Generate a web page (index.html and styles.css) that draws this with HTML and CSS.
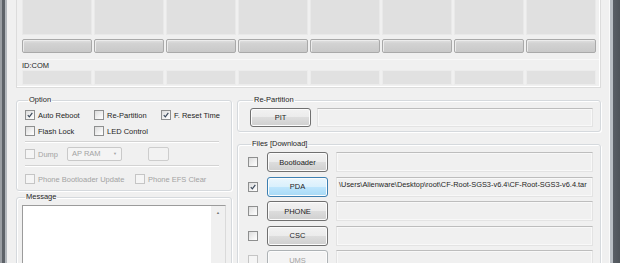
FILE: index.html
```html
<!DOCTYPE html>
<html lang="en">
<head>
    <meta charset="UTF-8">
    <title>Odin3</title>
    <link rel="stylesheet" href="styles.css">
</head>
<body>
    <div class="screen">
        <div class="edge-left"></div>
        <div class="window">
            <div class="top-frame">
                <div class="cells">
                    <div class="cell"></div><div class="cell"></div><div class="cell"></div><div class="cell"></div>
                    <div class="cell"></div><div class="cell"></div><div class="cell"></div><div class="cell"></div>
                </div>
                <div class="bars">
                    <div class="bar"></div><div class="bar"></div><div class="bar"></div><div class="bar"></div>
                    <div class="bar"></div><div class="bar"></div><div class="bar"></div><div class="bar"></div>
                </div>
                <div class="idcom">
                    <div class="id-label">ID:COM</div>
                    <div class="id-cells">
                        <div class="id-cell"></div><div class="id-cell"></div><div class="id-cell"></div><div class="id-cell"></div>
                        <div class="id-cell"></div><div class="id-cell"></div><div class="id-cell"></div><div class="id-cell"></div>
                    </div>
                </div>
            </div>

            <div class="lower">
                <div class="col-left">
                    <fieldset class="group option">
                        <legend>Option</legend>
                        <div class="opt-grid">
                            <label class="check"><span class="box checked"><svg viewBox="0 0 10 10"><path d="M2.2 5.2 L4.2 7.4 L7.9 2.4"/></svg></span>Auto Reboot</label>
                            <label class="check"><span class="box"></span>Re-Partition</label>
                            <label class="check"><span class="box checked"><svg viewBox="0 0 10 10"><path d="M2.2 5.2 L4.2 7.4 L7.9 2.4"/></svg></span>F. Reset Time</label>
                            <label class="check"><span class="box"></span>Flash Lock</label>
                            <label class="check"><span class="box"></span>LED Control</label>
                        </div>
                        <div class="sep"></div>
                        <div class="dump-row">
                            <label class="check disabled"><span class="box"></span>Dump</label>
                            <div class="combo">AP RAM<span class="arrow">&#9660;</span></div>
                            <div class="small-box"></div>
                        </div>
                        <div class="sep"></div>
                        <div class="phone-row">
                            <label class="check disabled wide"><span class="box"></span>Phone Bootloader Update</label>
                            <label class="check disabled"><span class="box"></span>Phone EFS Clear</label>
                        </div>
                    </fieldset>
                    <fieldset class="group message">
                        <legend>Message</legend>
                        <div class="msg-box">
                            <div class="msg-text"></div>
                            <div class="msg-scroll"><span class="up">&#9650;</span></div>
                        </div>
                    </fieldset>
                </div>

                <div class="col-right">
                    <fieldset class="group repart">
                        <legend>Re-Partition</legend>
                        <div class="file-row">
                            <button class="btn">PIT</button>
                            <div class="field"></div>
                        </div>
                    </fieldset>
                    <fieldset class="group files">
                        <legend>Files [Download]</legend>
                        <div class="file-list">
                            <div class="file-row">
                                <span class="box"></span>
                                <button class="btn">Bootloader</button>
                                <div class="field"></div>
                            </div>
                            <div class="file-row">
                                <span class="box checked"><svg viewBox="0 0 10 10"><path d="M2.2 5.2 L4.2 7.4 L7.9 2.4"/></svg></span>
                                <button class="btn hot">PDA</button>
                                <div class="field">\Users\Alienware\Desktop\root\CF-Root-SGS3-v6.4\CF-Root-SGS3-v6.4.tar</div>
                            </div>
                            <div class="file-row">
                                <span class="box"></span>
                                <button class="btn">PHONE</button>
                                <div class="field"></div>
                            </div>
                            <div class="file-row">
                                <span class="box"></span>
                                <button class="btn">CSC</button>
                                <div class="field"></div>
                            </div>
                            <div class="file-row">
                                <span class="box disabled"></span>
                                <button class="btn disabled">UMS</button>
                                <div class="field"></div>
                            </div>
                        </div>
                    </fieldset>
                </div>
            </div>
        </div>
        <div class="edge-right"></div>
    </div>
</body>
</html>
```

FILE: styles.css
```css
* {
    box-sizing: border-box;
}
body {
    margin: 0;
    width: 620px;
    height: 263px;
    overflow: hidden;
    font-family: "Liberation Sans", Arial, sans-serif;
    font-size: 7.5px;
    color: #1e1e1e;
    background-color: #f0f0f0;
}
.screen {
    display: flex;
    height: 263px;
}
.edge-left {
    flex: 0 0 7px;
    background: linear-gradient(to right, #9a9ea3 0, #9a9ea3 2px, #5d6268 2px, #5d6268 5px, #b4b8bd 5px);
}
.edge-right {
    flex: 0 0 10px;
    background: linear-gradient(to right, #b9bec4 0, #b9bec4 3px, #5a5f66 3px, #4f545a 10px);
}
.window {
    flex: 1;
    min-width: 0;
    padding: 0 8px 0 9px;
    background-color: #f0f0f0;
    border-right: 1px solid #fafafa;
}

/* top status area */
.top-frame {
    border: 1px solid #dcdcdc;
    border-top: none;
    box-shadow: inset -1px -1px 0 #fff;
    padding: 0 4px 0 5px;
    height: 88px;
}
.cells, .bars, .id-cells {
    display: grid;
    grid-template-columns: repeat(8, 70px);
    gap: 2px;
}
.cell {
    height: 35px;
    background-color: #e0e0e0;
    border: 1px solid #e9e9e9;
    border-top: none;
}
.bars {
    margin-top: 4px;
}
.bar {
    height: 14px;
    border: 1px solid #a9a9a9;
    border-radius: 2px;
    background: linear-gradient(#e2e2e2 0, #d2d2d2 30%, #c9c9c9 100%);
    box-shadow: inset 1px 1px 0 #ececec;
}
.idcom {
    margin: 6px -3px 0 -4px;
    padding: 0 3px 0 4px;
    border-top: 1px solid #f8f8f8;
}
.id-label {
    height: 10px;
    line-height: 9px;
    padding-top: 1px;
    color: #1e1e1e;
}
.id-cell {
    height: 15px;
    background-color: #e1e1e1;
    border: 1px solid #ececec;
}

/* lower panels */
.lower {
    display: flex;
    gap: 5px;
}
.col-left {
    flex: 0 0 216px;
}
.col-right {
    flex: 1;
    min-width: 0;
}
.group {
    margin: 7px 0 0 0;
    border: 1px solid #d5d9dd;
    border-radius: 3px;
    box-shadow: 1px 1px 0 #fff, inset 1px 1px 0 #fff;
    padding: 4px 8px 5px 8px;
    min-width: 0;
}
.group legend {
    padding: 0 1px;
    margin-left: 3px;
    line-height: 10px;
    height: 10px;
}
.check {
    display: flex;
    align-items: center;
    height: 12px;
    white-space: nowrap;
}
.box {
    display: inline-block;
    flex-shrink: 0;
    width: 10px;
    height: 10px;
    border: 1px solid #8e8f8f;
    background: linear-gradient(135deg, #dcdcdc, #f6f6f6 70%, #fff);
    margin-right: 3px;
}
.box svg {
    width: 8px;
    height: 8px;
    display: block;
}
.box svg path {
    fill: none;
    stroke: #3c4a5c;
    stroke-width: 1.5;
}
.check.disabled, .btn.disabled {
    color: #a3a3a3;
}
.check.disabled .box, .box.disabled {
    border-color: #c5c5c5;
    background: #f5f5f5;
}
.opt-grid {
    display: grid;
    grid-template-columns: 69px 67px auto;
    row-gap: 4px;
}
.sep {
    height: 2px;
    border-top: 1px solid #d3d3d3;
    border-bottom: 1px solid #fff;
    margin: 4px 4px 0 0;
}
.dump-row {
    display: flex;
    align-items: center;
    height: 14px;
    margin: 4px 0 0 0;
}
.dump-row .check {
    width: 42px;
}
.combo {
    width: 55px;
    height: 14px;
    border: 1px solid #c9c9c9;
    border-radius: 2px;
    background-color: #f4f4f4;
    color: #a3a3a3;
    padding-left: 4px;
    line-height: 12px;
    display: flex;
    justify-content: space-between;
}
.combo .arrow {
    font-size: 4px;
    width: 12px;
    text-align: center;
    line-height: 12px;
}
.small-box {
    margin-left: 26px;
    width: 21px;
    height: 14px;
    border: 1px solid #cdcdcd;
    border-radius: 2px;
    background-color: #f2f2f2;
}
.sep + .phone-row {
    margin-top: 6px;
}
.phone-row {
    display: flex;
}
.phone-row .wide {
    width: 110px;
}
.message {
    margin-top: 1px;
    padding: 3px 5px 0 5px;
}
.msg-box {
    display: flex;
    height: 70px;
    border: 1px solid #9b9b9b;
    border-right-color: #dadada;
    border-bottom: none;
    background-color: #fff;
    width: 204px;
}
.msg-text {
    flex: 1;
}
.msg-scroll {
    width: 14px;
    background-color: #f0f0f0;
    text-align: center;
}
.msg-scroll .up {
    font-size: 4px;
    color: #777;
    line-height: 13px;
}

/* file rows */
.repart {
    padding: 3px 7px 4px 12px;
}
.files {
    padding: 3px 7px 0 10px;
}
.file-list {
    display: flex;
    flex-direction: column;
    gap: 4.5px;
}
.file-row {
    display: flex;
    align-items: center;
}
.file-row .box {
    margin-right: 9px;
}
.btn {
    width: 61px;
    height: 20px;
    padding: 0;
    font-family: inherit;
    font-size: 7.5px;
    color: #1e1e1e;
    border: 1px solid #707070;
    border-radius: 3px;
    background: linear-gradient(#f2f2f2 0, #ebebeb 50%, #dddddd 50%, #cfcfcf 100%);
    box-shadow: inset 0 0 0 1px #fcfcfc;
    flex-shrink: 0;
}
.repart .btn {
    height: 19px;
}
.btn.hot {
    border-color: #3c7fb1;
    background: linear-gradient(#eaf6fd 0, #d9f0fc 50%, #bee6fd 50%, #a7d9f5 100%);
}
.btn.disabled {
    border-color: #adb2b5;
    background: #f4f4f4;
}
.field {
    flex: 1;
    min-width: 0;
    height: 20px;
    margin-left: 8px;
    border: 1px solid #e3e3e3;
    border-top-color: #bdbdbd;
    background-color: #f0f0f0;
    box-shadow: inset 0 0 0 1px #f8f8f8;
    padding: 0 2px;
    font-size: 7.4px;
    line-height: 14px;
    white-space: nowrap;
    overflow: hidden;
}
.repart .field {
    height: 19px;
    margin-left: 6px;
}
```
